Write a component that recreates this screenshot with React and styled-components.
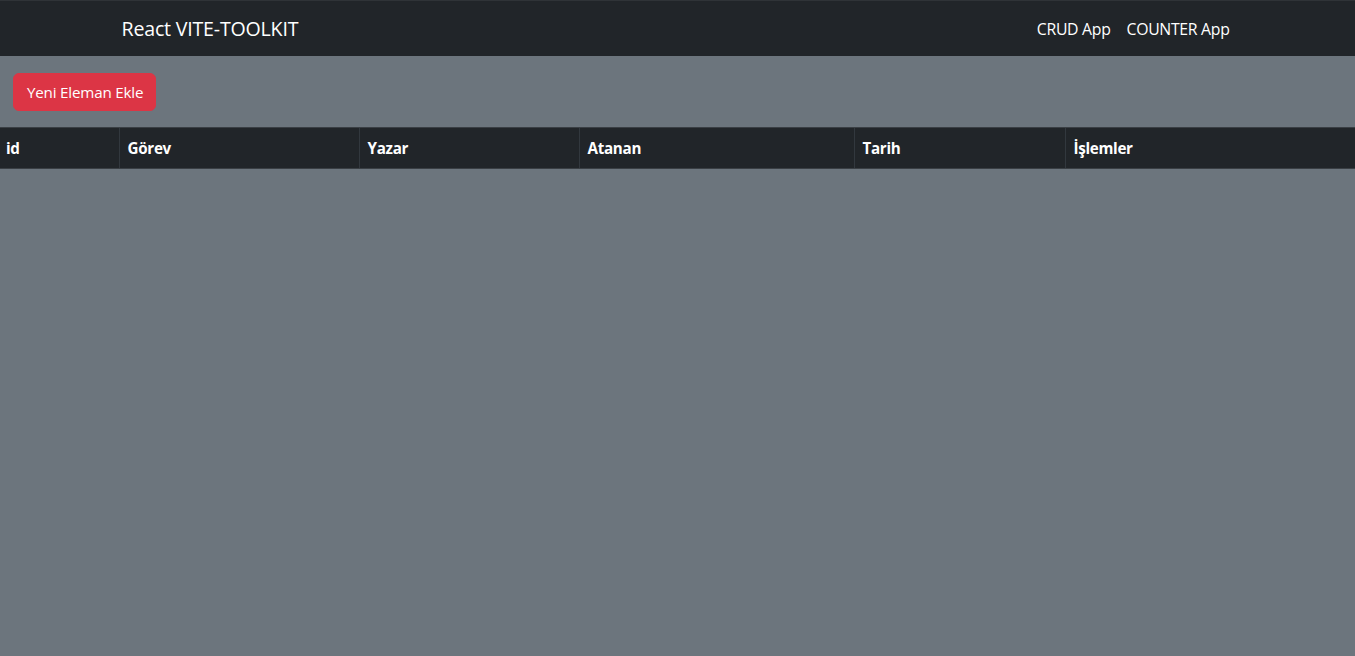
import React from 'react';
import styled, { createGlobalStyle } from 'styled-components';

const GlobalStyle = createGlobalStyle`
  html, body {
    margin: 0;
    padding: 0;
    background: #6c757d;
    font-family: "Open Sans", "Noto Sans", sans-serif;
    color: #fff;
  }
  #root {
    min-height: 100vh;
    background: #6c757d;
  }
`

const Navbar = styled.nav`
  height: 56px;
  box-sizing: border-box;
  background: #212529;
  border-top: 1px solid #2f3337;
  display: flex;
  align-items: center;
`
const NavContainer = styled.div`
  width: 1140px;
  margin: 0 auto;
  padding: 0 10px 0 14px;
  box-sizing: border-box;
  display: flex;
  justify-content: space-between;
  align-items: center;
`
const Brand = styled.a`
  font-size: 19.6px;
  color: #fff;
  text-decoration: none;
  letter-spacing: -0.2px;
`
const NavLinks = styled.div`
  display: flex;
  align-items: center;
`
const NavLink = styled.a`
  font-size: 15.8px;
  color: #fff;
  text-decoration: none;
  padding: 8px;
  letter-spacing: -0.3px;
`

const Toolbar = styled.div`
  padding: 17px 13px 16px;
`
const AddButton = styled.button`
  background: #dc3545;
  border: 1px solid #dc3545;
  color: #fff;
  border-radius: 6px;
  height: 38px;
  padding: 0 12px 0 13px;
  font-family: inherit;
  font-size: 15.2px;
  letter-spacing: -0.2px;
  cursor: pointer;
`

const Table = styled.table`
  width: 100%;
  border-collapse: collapse;
  background: #212529;
`
const Th = styled.th`
  width: ${p => p.w}px;
  text-align: left;
  height: 41px;
  box-sizing: border-box;
  padding: 0 8px 0 ${p => (p.first ? 6 : 8)}px;
  font-size: 15.2px;
  font-weight: 700;
  letter-spacing: -0.3px;
  color: #fff;
  border-top: 1px solid #3a3f44;
  border-bottom: 1px solid #3a3f44;
  border-left: ${p => (p.first ? 'none' : '1px solid #32383e')};
`

const columns = [
  { label: 'id', w: 119 },
  { label: 'Görev', w: 240 },
  { label: 'Yazar', w: 220 },
  { label: 'Atanan', w: 275 },
  { label: 'Tarih', w: 211 },
  { label: 'İşlemler', w: 290 },
]

function App() {
  return (
    <>
      <GlobalStyle />
      <Navbar>
        <NavContainer>
          <Brand href="#">React VITE-TOOLKIT</Brand>
          <NavLinks>
            <NavLink href="#">CRUD App</NavLink>
            <NavLink href="#">COUNTER App</NavLink>
          </NavLinks>
        </NavContainer>
      </Navbar>
      <Toolbar>
        <AddButton>Yeni Eleman Ekle</AddButton>
      </Toolbar>
      <Table>
        <thead>
          <tr>
            {columns.map((c, i) => (
              <Th key={c.label} w={c.w} first={i === 0}>{c.label}</Th>
            ))}
          </tr>
        </thead>
        <tbody></tbody>
      </Table>
    </>
  );
}

export default App;
